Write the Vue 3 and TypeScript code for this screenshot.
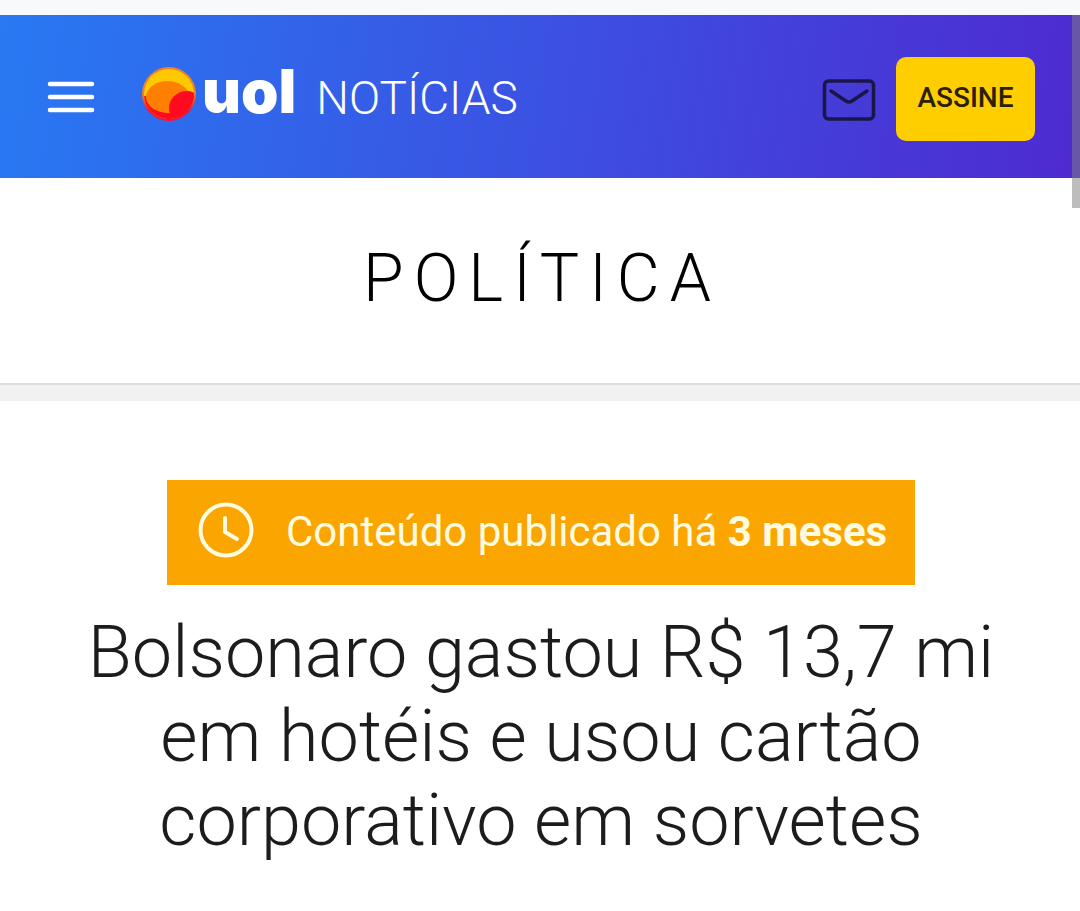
<script setup lang="ts">
interface Notice {
  label: string
  age: string
}

const section: string = 'Política'
const notice: Notice = { label: 'Conteúdo publicado há', age: '3 meses' }
const headline: string = 'Bolsonaro gastou R$ 13,7 mi em hotéis e usou cartão corporativo em sorvetes'
</script>

<template>
  <div class="page">
    <div class="scroll-thumb" aria-hidden="true"></div>
    <header class="topbar">
      <button class="menu" type="button" aria-label="Menu">
        <svg width="48" height="32" viewBox="0 0 48 32" fill="none" stroke="#fff" stroke-width="4.5" stroke-linecap="round">
          <path d="M3 3H45M3 16H45M3 29H45" />
        </svg>
      </button>
      <a class="brand" href="#">
        <svg class="sphere" width="56" height="56" viewBox="0 0 56 56" aria-hidden="true">
          <defs>
            <clipPath id="ball"><circle cx="27" cy="28" r="25" /></clipPath>
            <linearGradient id="rim" x1="0" y1="0" x2="0" y2="1">
              <stop offset="0.5" stop-color="#ee8226" />
              <stop offset="0.8" stop-color="#f0143c" />
            </linearGradient>
          </defs>
          <circle cx="27" cy="28" r="27" fill="url(#rim)" />
          <g clip-path="url(#ball)">
            <rect width="56" height="56" fill="#ffc800" />
            <path d="M0 30H56V56H0Z" fill="#ff0a1e" />
            <path d="M4 29C7 20 15 15 25 15C36 15 45 21 49 30L40 44L28 47C14 47 3 40 4 29Z" fill="#ff8000" />
            <path d="M28 48C24 36 33 25 45 25C50 25 53 27 56 31V56H20Z" fill="#ff0a1e" />
          </g>
        </svg>
        <span class="wordmark">uol</span>
        <span class="channel">NOTÍCIAS</span>
      </a>
      <a class="mail" href="#" aria-label="E-mail">
        <svg width="54" height="42" viewBox="0 0 54 42" fill="none" stroke="#1a1748" stroke-width="3.5" stroke-linecap="round" stroke-linejoin="round">
          <rect x="2.5" y="2" width="49" height="38" rx="4" />
          <path d="M9 12L24 22Q27 24 30 22L45 12" />
        </svg>
      </a>
      <button class="subscribe" type="button">ASSINE</button>
    </header>

    <div class="section">
      <a href="#">{{ section }}</a>
    </div>

    <main class="article">
      <p class="notice">
        <svg width="56" height="56" viewBox="0 0 56 56" fill="none" stroke="#fffbe0" stroke-width="4" stroke-linecap="round" stroke-linejoin="round" aria-hidden="true">
          <circle cx="28" cy="28" r="25.5" />
          <path d="M27 16V30L39 37" />
        </svg>
        <span>{{ notice.label }} <strong>{{ notice.age }}</strong></span>
      </p>
      <h1>{{ headline }}</h1>
    </main>
  </div>
</template>

<style>
body {
  margin: 0;
  background: #fff;
}
</style>

<style scoped>
.page {
  position: relative;
  border-top: 15px solid #f8f9fb;
  color: #1c1c1c;
  font-family: Roboto, "Open Sans", sans-serif;
}

.scroll-thumb {
  position: absolute;
  top: 0;
  right: 0;
  width: 8px;
  height: 193px;
  background: rgba(128, 128, 128, 0.52);
}

.topbar {
  display: flex;
  align-items: center;
  box-sizing: border-box;
  height: 163px;
  padding: 0 45px 0 47px;
  background: linear-gradient(98deg, #2879f3 0%, #4e2ad0 100%);
}

button {
  border: 0;
  font-family: inherit;
}

.menu {
  display: flex;
  padding: 0;
  background: none;
}

.brand {
  display: flex;
  align-items: center;
  margin-left: 47px;
  color: #fff;
  text-decoration: none;
}

.sphere {
  margin-bottom: 6px;
}

.wordmark {
  margin: 0 0 12px 4px;
  font: 900 60px/80px Inter, sans-serif;
}

.channel {
  margin: 2px 0 0 20px;
  font-size: 46px;
  font-weight: 300;
  line-height: 60px;
}

.mail {
  display: flex;
  margin-left: auto;
  padding-top: 6px;
}

.subscribe {
  margin: 4px 0 0 20px;
  width: 139px;
  height: 84px;
  padding: 0 0 2px;
  border-radius: 10px;
  background: #ffce00;
  color: #2a2008;
  font-size: 28px;
  font-weight: 500;
}

.section {
  padding: 51px 0 54px;
  border-bottom: 2px solid #dedede;
  box-shadow: 0 16px 0 #f1f1f1;
  text-align: center;
}

.section a {
  display: block;
  padding-left: 4px;
  color: #000;
  font-size: 66px;
  font-weight: 300;
  line-height: 100px;
  letter-spacing: 10px;
  text-transform: uppercase;
  text-decoration: none;
}

.article {
  display: flex;
  flex-direction: column;
  align-items: center;
  padding: 95px 59px 40px 61px;
}

.notice {
  display: flex;
  align-items: center;
  gap: 32px;
  box-sizing: border-box;
  width: 748px;
  max-width: 100%;
  margin: 0;
  padding: 20px 20px 22px 31px;
  background: #fba600;
  color: #fffbe0;
  font-size: 42px;
  line-height: 63px;
  white-space: nowrap;
}

.notice svg {
  flex: none;
  margin-bottom: 4px;
}

.notice strong {
  font-weight: 700;
}

h1 {
  margin: 26px 0 0;
  font-size: 72px;
  font-weight: 300;
  line-height: 84px;
  text-align: center;
}
</style>
